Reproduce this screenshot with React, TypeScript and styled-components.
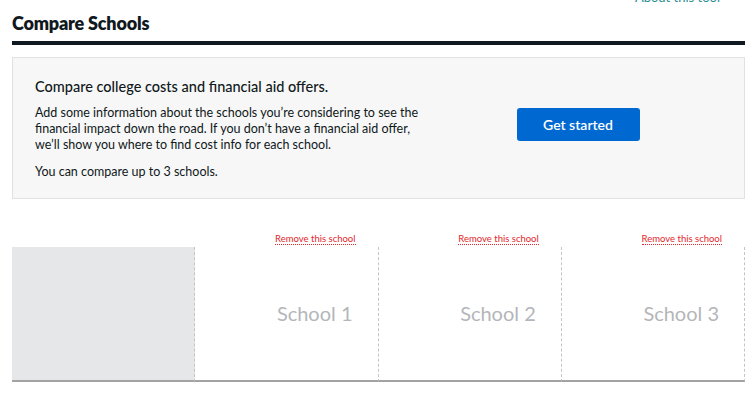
import styled, { createGlobalStyle } from "styled-components";

const GlobalStyle = createGlobalStyle`
  html, body {
    margin: 0;
    padding: 0;
    background: #fff;
    overflow: hidden;
  }
  body {
    font-family: Lato, "Open Sans", sans-serif;
    color: #101820;
  }
`;

const Page = styled.div`
  width: 733px;
  padding-left: 12px;
`;

const TopBar = styled.div`
  display: flex;
  justify-content: flex-end;
  height: 4px;
  overflow: hidden;
  padding-right: 25px;
`;

const AboutLink = styled.a`
  color: #1f8b8f;
  font-size: 13px;
  line-height: 13px;
  margin-top: -9px;
  text-decoration: none;
`;

const Title = styled.h1`
  margin: 0;
  padding-top: 8px;
  font-size: 18px;
  font-weight: 800;
  line-height: 22px;
  letter-spacing: -0.2px;
`;

const Rule = styled.div`
  margin-top: 7px;
  height: 4px;
  background: #101820;
`;

const Intro = styled.section`
  margin-top: 12px;
  height: 142px;
  box-sizing: border-box;
  border: 1px solid #e1e1e1;
  background: #f7f7f7;
  display: grid;
  grid-template-columns: 420px 1fr;
  align-items: center;
`;

const IntroText = styled.div`
  padding-left: 22px;
  padding-top: 2px;
`;

const IntroHeading = styled.h2`
  margin: 0 0 9px;
  font-size: 14.5px;
  font-weight: 500;
  line-height: 18px;
`;

const IntroPara = styled.p<{ gap?: number }>`
  margin: 0 0 ${(p) => p.gap ?? 0}px;
  font-size: 12.5px;
  line-height: 16px;
  max-width: 395px;
`;

const ButtonCell = styled.div`
  display: flex;
  justify-content: center;
  padding-right: 21px;
  padding-bottom: 7px;
`;

const PrimaryButton = styled.button`
  width: 123px;
  height: 33px;
  border: 0;
  border-radius: 3px;
  background: #0069d1;
  color: #fff;
  font-family: inherit;
  font-size: 14px;
  font-weight: 600;
  cursor: pointer;
`;

const Compare = styled.div`
  margin-top: 35px;
  display: grid;
  grid-template-columns: repeat(4, 1fr);
`;

const RemoveCell = styled.div`
  height: 13px;
  display: flex;
  justify-content: flex-end;
  align-items: flex-start;
  padding-right: 23px;
`;

const RemoveLink = styled.a`
  color: #e3262a;
  font-size: 9.5px;
  line-height: 10px;
  text-decoration: none;
  border-bottom: 1px dotted #e3262a;
  cursor: pointer;
`;

const SchoolCell = styled.div<{ filled?: boolean }>`
  height: 135px;
  box-sizing: border-box;
  background: ${(p) => (p.filled ? "#e6e7e8" : "#fff")};
  border-right: 1px dashed #c4c4c4;
  border-bottom: 2px solid #a3a3a3;
  display: flex;
  align-items: center;
  justify-content: flex-end;
  padding-right: 25px;
  padding-bottom: 2px;
`;

const SchoolName = styled.span`
  font-size: 20px;
  color: #b4b6b9;
`;

const schools = ["School 1", "School 2", "School 3"];

export default function App() {
  return (
    <Page>
      <GlobalStyle />
      <TopBar>
        <AboutLink>About this tool</AboutLink>
      </TopBar>
      <Title>Compare Schools</Title>
      <Rule />
      <Intro>
        <IntroText>
          <IntroHeading>Compare college costs and financial aid offers.</IntroHeading>
          <IntroPara gap={11}>
            Add some information about the schools you’re considering to see the
            financial impact down the road. If you don’t have a financial aid offer,
            we’ll show you where to find cost info for each school.
          </IntroPara>
          <IntroPara>You can compare up to 3 schools.</IntroPara>
        </IntroText>
        <ButtonCell>
          <PrimaryButton>Get started</PrimaryButton>
        </ButtonCell>
      </Intro>
      <Compare>
        <RemoveCell />
        {schools.map((s) => (
          <RemoveCell key={s}>
            <RemoveLink>Remove this school</RemoveLink>
          </RemoveCell>
        ))}
        <SchoolCell filled />
        {schools.map((s) => (
          <SchoolCell key={s}>
            <SchoolName>{s}</SchoolName>
          </SchoolCell>
        ))}
      </Compare>
    </Page>
  );
}
